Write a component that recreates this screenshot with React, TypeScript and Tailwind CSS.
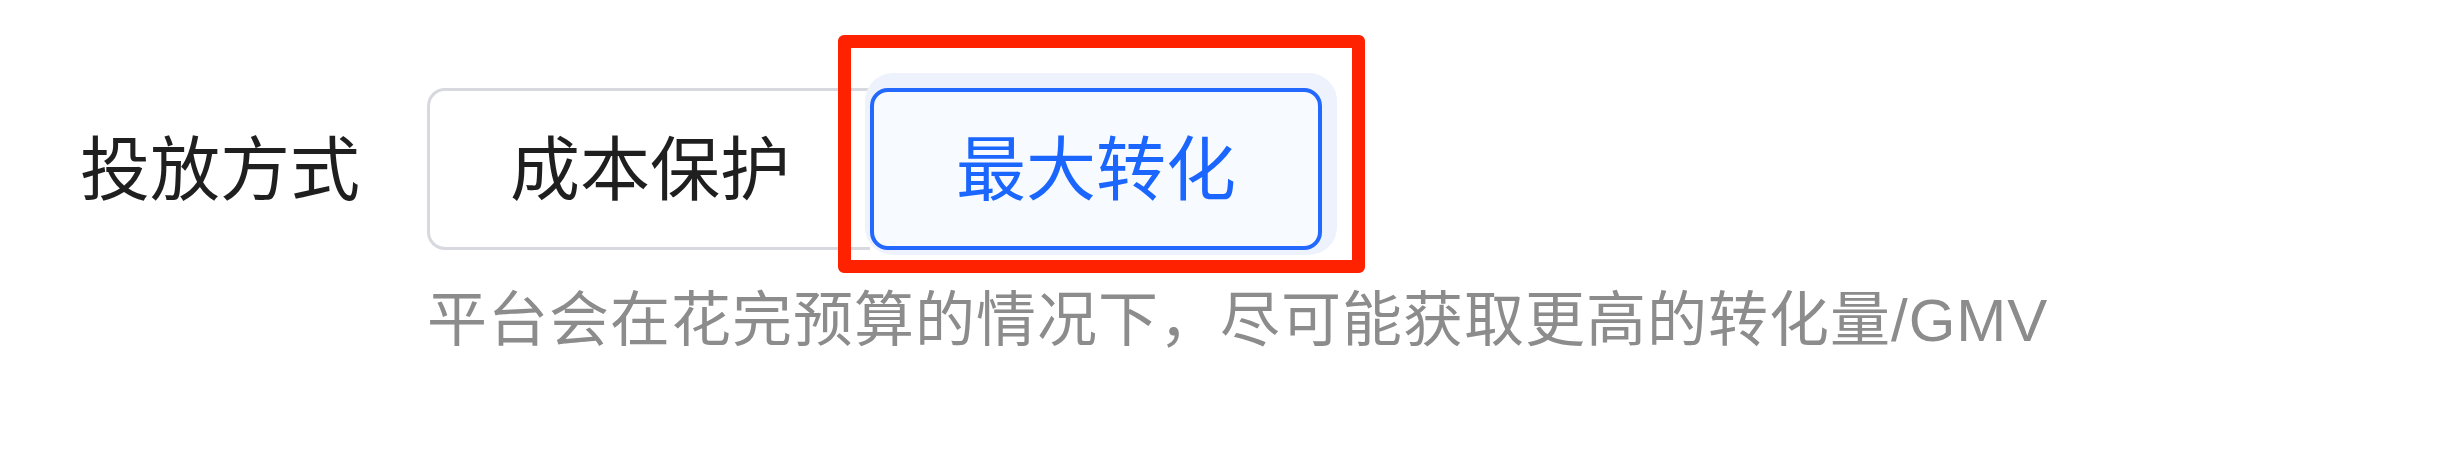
import React from "react";

const cjk = "font-['PingFang_SC','Noto_Sans_CJK_SC',sans-serif]";

export default function App() {
  return (
    <div className={`h-[462px] w-[2455px] bg-white ${cjk}`}>
      <div className="flex items-start pl-[80px] pt-[88px]">
        <div className="flex h-[162px] w-[347px] items-center pb-[8px] text-[70px] leading-none text-[#1f1f1f]">
          投放方式
        </div>
        <div className="flex flex-col">
          <div className="flex">
            <button className="flex h-[162px] w-[443px] items-center justify-center rounded-l-[18px] border-[3px] border-r-0 border-[#d7d9de] bg-white pb-[8px] text-[70px] leading-none text-[#1f1f1f]">
              成本保护
            </button>
            <div className="relative">
              <button className="flex h-[162px] w-[452px] items-center justify-center rounded-[18px] border-[4px] border-[#2368ff] bg-[#f7faff] pb-[8px] text-[70px] leading-none text-[#1a66ff] shadow-[5px_-5px_0_10px_#edf2fc]">
                最大转化
              </button>
              {/* highlight frame drawn over the selected option */}
              <div className="pointer-events-none absolute -left-[32px] -top-[53px] -right-[43px] -bottom-[23px] rounded-[6px] border-[13px] border-[#ff2200]" />
            </div>
          </div>
          <p className="mt-[23px] text-[60px] leading-[84px] tracking-[1px] text-[#8c8c8c]">
            平台会在花完预算的情况下，尽可能获取更高的转化量
            <span className="font-['Liberation_Sans',sans-serif]">/GMV</span>
          </p>
        </div>
      </div>
    </div>
  );
}
